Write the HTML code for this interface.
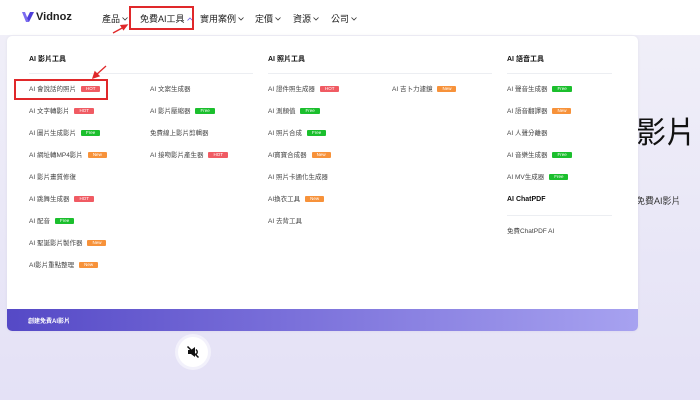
<!DOCTYPE html>
<html><head><meta charset="utf-8"><style>
*{margin:0;padding:0;box-sizing:border-box}
body{width:700px;height:400px;overflow:hidden;position:relative;font-family:"Liberation Sans","Noto Sans CJK TC",sans-serif;background:linear-gradient(180deg,#f1f0f8 0%,#e9e7f7 60%,#e4e1f6 100%);color:#333}
.hdr{position:absolute;left:0;top:0;width:700px;height:35px;background:#fff}
.nav{position:absolute;top:12px;font-size:9px;color:#222;white-space:nowrap;letter-spacing:0}
.nav svg{vertical-align:1px;margin-left:2px}
.abs{position:absolute;white-space:nowrap}
.panel{position:absolute;left:7px;top:36px;width:631px;height:295px;background:#fff;border-radius:5px;overflow:hidden;box-shadow:0 0 3px rgba(0,0,0,.06)}
.foot{position:absolute;left:0;bottom:0;width:100%;height:22px;background:linear-gradient(90deg,#5549c6,#7a70da 45%,#a7a2f0);color:#fff;font-size:6px;padding:7px 0 0 21px;font-weight:bold}
.h{position:absolute;font-size:7px;font-weight:bold;color:#111}
.ln{position:absolute;height:1px;background:#eceef2}
.it{position:absolute;font-size:6.5px;color:#444;white-space:nowrap;line-height:8px}
.t{display:inline-block;font-size:4.5px;color:#fff;padding:0 5px;height:6px;line-height:6px;margin-left:5px;vertical-align:1px;border-radius:1px}
.hot{background:#f05b63}.free{background:#1bbf2d}.new{background:#f7923a}
</style></head><body>
<div class="hdr"></div>
<svg class="abs" style="left:21px;top:11px" width="14" height="12" viewBox="0 0 14 12"><path d="M1 1 L5 11 L8 11 L4 1Z" fill="#7b6cf0"/><path d="M6 7 L9 1 L13 1 L8 11Z" fill="#4e3fd9"/></svg>
<div class="abs" style="left:36px;top:11px;font-size:11px;font-weight:bold;color:#222">Vidnoz</div>
<div class="nav" style="left:102px">產品<svg width="6" height="4" viewBox="0 0 6 4"><path d="M0.5 0.5 L3 3 L5.5 0.5" stroke="#333" fill="none" stroke-width="0.8"/></svg></div>
<div class="nav" style="left:140px">免費AI工具<svg width="6" height="4" viewBox="0 0 6 4"><path d="M0.5 3.5 L3 1 L5.5 3.5" stroke="#6c5fe0" fill="none" stroke-width="0.8"/></svg></div>
<div class="nav" style="left:200px">實用案例<svg width="6" height="4" viewBox="0 0 6 4"><path d="M0.5 0.5 L3 3 L5.5 0.5" stroke="#333" fill="none" stroke-width="0.8"/></svg></div>
<div class="nav" style="left:255px">定價<svg width="6" height="4" viewBox="0 0 6 4"><path d="M0.5 0.5 L3 3 L5.5 0.5" stroke="#333" fill="none" stroke-width="0.8"/></svg></div>
<div class="nav" style="left:293px">資源<svg width="6" height="4" viewBox="0 0 6 4"><path d="M0.5 0.5 L3 3 L5.5 0.5" stroke="#333" fill="none" stroke-width="0.8"/></svg></div>
<div class="nav" style="left:331px">公司<svg width="6" height="4" viewBox="0 0 6 4"><path d="M0.5 0.5 L3 3 L5.5 0.5" stroke="#333" fill="none" stroke-width="0.8"/></svg></div>
<div class="abs" style="left:129px;top:6px;width:65px;height:24px;border:2px solid #e0282a"></div>
<div class="abs" style="left:636px;top:108px;font-size:30px;color:#111">影片</div>
<div class="abs" style="left:636px;top:194px;font-size:9px;color:#333">免費AI影片</div>
<div class="panel">
<div class="h" style="left:22px;top:18px">AI 影片工具</div>
<div class="h" style="left:261px;top:18px">AI 照片工具</div>
<div class="h" style="left:500px;top:18px">AI 語音工具</div>
<div class="ln" style="left:22px;top:37px;width:224px"></div>
<div class="ln" style="left:261px;top:37px;width:224px"></div>
<div class="ln" style="left:500px;top:37px;width:105px"></div>
<div class="it" style="left:22px;top:50px">AI 會說話的照片<span class="t hot">HOT</span></div>
<div class="it" style="left:22px;top:72px">AI 文字轉影片<span class="t hot">HOT</span></div>
<div class="it" style="left:22px;top:94px">AI 圖片生成影片<span class="t free">Free</span></div>
<div class="it" style="left:22px;top:116px">AI 網址轉MP4影片<span class="t new">New</span></div>
<div class="it" style="left:22px;top:138px">AI 影片畫質修復</div>
<div class="it" style="left:22px;top:160px">AI 跳舞生成器<span class="t hot">HOT</span></div>
<div class="it" style="left:22px;top:182px">AI 配音<span class="t free">Free</span></div>
<div class="it" style="left:22px;top:204px">AI 聖誕影片製作器<span class="t new">New</span></div>
<div class="it" style="left:22px;top:226px">AI影片重點整理<span class="t new">New</span></div>
<div class="it" style="left:143px;top:50px">AI 文案生成器</div>
<div class="it" style="left:143px;top:72px">AI 影片壓縮器<span class="t free">Free</span></div>
<div class="it" style="left:143px;top:94px">免費線上影片剪輯器</div>
<div class="it" style="left:143px;top:116px">AI 接吻影片產生器<span class="t hot">HOT</span></div>
<div class="it" style="left:261px;top:50px">AI 證件照生成器<span class="t hot">HOT</span></div>
<div class="it" style="left:261px;top:72px">AI 測顏值<span class="t free">Free</span></div>
<div class="it" style="left:261px;top:94px">AI 照片合成<span class="t free">Free</span></div>
<div class="it" style="left:261px;top:116px">AI寶寶合成器<span class="t new">New</span></div>
<div class="it" style="left:261px;top:138px">AI 照片卡通化生成器</div>
<div class="it" style="left:261px;top:160px">AI換衣工具<span class="t new">New</span></div>
<div class="it" style="left:261px;top:182px">AI 去背工具</div>
<div class="it" style="left:385px;top:50px">AI 吉卜力濾鏡<span class="t new">New</span></div>
<div class="it" style="left:500px;top:50px">AI 聲音生成器<span class="t free">Free</span></div>
<div class="it" style="left:500px;top:72px">AI 語音翻譯器<span class="t new">New</span></div>
<div class="it" style="left:500px;top:94px">AI 人聲分離器</div>
<div class="it" style="left:500px;top:116px">AI 音樂生成器<span class="t free">Free</span></div>
<div class="it" style="left:500px;top:138px">AI MV生成器<span class="t free">Free</span></div>
<div class="h" style="left:500px;top:160px">AI ChatPDF</div>
<div class="ln" style="left:500px;top:179px;width:105px"></div>
<div class="it" style="left:500px;top:192px">免費ChatPDF AI</div>
<div class="foot">創建免費AI影片</div>
</div>
<div class="abs" style="left:14px;top:79px;width:94px;height:21px;border:2px solid #e0282a"></div>
<svg class="abs" style="left:0;top:0" width="700" height="400"><g stroke="#e0282a" stroke-width="1.3" fill="#e0282a"><line x1="113" y1="33" x2="124" y2="27"/><path d="M127 25 L121 25.5 L123.5 29.5Z"/><line x1="106" y1="66" x2="96" y2="75"/><path d="M93 78 L95 72 L99 76Z"/></g></svg>
<div class="abs" style="left:178px;top:337px;width:30px;height:30px;border-radius:50%;background:#fff;box-shadow:0 0 0 3px rgba(255,255,255,.5)"></div>
<svg class="abs" style="left:186px;top:345px" width="14" height="14" viewBox="0 0 14 14"><path d="M2 5 H5 L9 2 V12 L5 9 H2Z" fill="#111"/><path d="M10 4.5 Q12.5 7 10 9.5" stroke="#111" fill="none" stroke-width="1.3"/><line x1="1.5" y1="1.5" x2="12.5" y2="12.5" stroke="#111" stroke-width="1.5"/></svg>
</body></html>
